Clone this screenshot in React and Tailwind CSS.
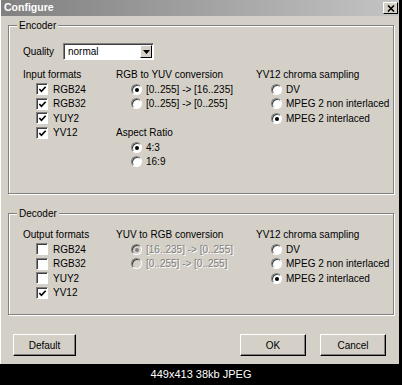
import React from 'react';

const font = { fontFamily: '"Liberation Sans", Arial, sans-serif' };

function Check({ checked }) {
  return (
    <span className="relative w-[12px] h-[12px] bg-white border border-t-[#808080] border-l-[#808080] border-b-white border-r-white shadow-[inset_1px_1px_0_#404040] shrink-0">
      {checked && (
        <svg viewBox="0 0 10 10" className="absolute left-[1px] top-[1px] w-[9px] h-[9px]">
          <path d="M1.5 4.5 L3.8 7 L8.5 2" fill="none" stroke="#000" strokeWidth="1.8" />
        </svg>
      )}
    </span>
  );
}

function Radio({ checked, disabled }) {
  return (
    <span
      className={`relative w-[11px] h-[11px] rounded-full border border-t-[#808080] border-l-[#808080] border-b-white border-r-white shadow-[inset_1px_1px_0_#404040] shrink-0 ${disabled ? 'bg-[#d4d0c8]' : 'bg-white'}`}
    >
      {checked && (
        <span className={`absolute left-[3px] top-[3px] w-[4px] h-[4px] rounded-full ${disabled ? 'bg-[#808080]' : 'bg-black'}`} />
      )}
    </span>
  );
}

function CheckRow({ label, checked }) {
  return (
    <div className="h-[14.5px] flex items-center pl-[13px] gap-[5px]">
      <Check checked={checked} />
      <span>{label}</span>
    </div>
  );
}

function RadioRow({ label, checked, disabled }) {
  return (
    <div className="h-[14.5px] flex items-center pl-[15px] gap-[4px]">
      <Radio checked={checked} disabled={disabled} />
      <span className={disabled ? 'text-[#808080] [text-shadow:1px_1px_0_#fff]' : ''}>{label}</span>
    </div>
  );
}

function Heading({ children }) {
  return <div className="h-[16px] flex items-center">{children}</div>;
}

function Group({ title, className, children }) {
  return (
    <div className={`relative border border-[#808080] shadow-[1px_1px_0_#fff,inset_1px_1px_0_#fff] ${className}`}>
      <span className="absolute left-[8px] top-[-7px] px-[2px] bg-[#d4d0c8] leading-[13px]">{title}</span>
      {children}
    </div>
  );
}

function Button({ children, className }) {
  return (
    <button className={`h-[22px] bg-[#d4d0c8] border border-t-white border-l-white border-b-black border-r-black shadow-[inset_-1px_-1px_0_#808080] flex items-center justify-center ${className}`}>
      {children}
    </button>
  );
}

function Chroma() {
  return (
    <div>
      <Heading>YV12 chroma sampling</Heading>
      <RadioRow label="DV" />
      <RadioRow label="MPEG 2 non interlaced" />
      <RadioRow label="MPEG 2 interlaced" checked />
    </div>
  );
}

export default function App() {
  return (
    <div className="w-[402px] h-[385px] bg-black flex flex-col text-[10px] text-black" style={font}>
      <div className="w-[399px] h-[364px] bg-[#d4d0c8] border-l border-l-white flex flex-col">
        <div className="h-[16px] flex items-center justify-between bg-gradient-to-r from-[#808080] to-[#c4c4c4] pl-[3px] pr-[1px]">
          <span className="text-white font-bold text-[10.5px]">Configure</span>
          <span className="w-[15px] h-[12px] bg-[#d4d0c8] border border-t-white border-l-white border-b-black border-r-black flex items-center justify-center">
            <svg viewBox="0 0 8 7" className="w-[8px] h-[7px]">
              <path d="M1 0.5 L7 6.5 M7 0.5 L1 6.5" stroke="#000" strokeWidth="1.6" />
            </svg>
          </span>
        </div>

        <div className="flex flex-col pl-[7px] pr-[5px]">
          <Group title="Encoder" className="mt-[9px] h-[169px] pl-[14px] pt-[17px]">
            <div className="flex items-center h-[17px]">
              <span className="w-[40px]">Quality</span>
              <div className="w-[91px] h-[17px] bg-white border border-t-[#808080] border-l-[#808080] border-b-white border-r-white shadow-[inset_1px_1px_0_#404040] flex items-center justify-between pl-[4px] pr-[1px]">
                <span>normal</span>
                <span className="w-[12px] h-[13px] bg-[#d4d0c8] border border-t-white border-l-white border-b-black border-r-black flex items-center justify-center">
                  <svg viewBox="0 0 7 4" className="w-[7px] h-[4px]">
                    <path d="M0 0 H7 L3.5 4 Z" fill="#000" />
                  </svg>
                </span>
              </div>
            </div>
            <div className="flex mt-[6px]">
              <div className="w-[93px]">
                <Heading>Input formats</Heading>
                <CheckRow label="RGB24" checked />
                <CheckRow label="RGB32" checked />
                <CheckRow label="YUY2" checked />
                <CheckRow label="YV12" checked />
              </div>
              <div className="w-[140px]">
                <Heading>RGB to YUV conversion</Heading>
                <RadioRow label="[0..255] -> [16..235]" checked />
                <RadioRow label="[0..255] -> [0..255]" />
                <div className="mt-[13px]">
                  <Heading>Aspect Ratio</Heading>
                  <RadioRow label="4:3" checked />
                  <RadioRow label="16:9" />
                </div>
              </div>
              <Chroma />
            </div>
          </Group>

          <Group title="Decoder" className="mt-[19px] h-[102px] pl-[14px] pt-[12px]">
            <div className="flex">
              <div className="w-[93px]">
                <Heading>Output formats</Heading>
                <CheckRow label="RGB24" />
                <CheckRow label="RGB32" />
                <CheckRow label="YUY2" />
                <CheckRow label="YV12" checked />
              </div>
              <div className="w-[140px]">
                <Heading>YUV to RGB conversion</Heading>
                <RadioRow label="[16..235] -> [0..255]" checked disabled />
                <RadioRow label="[0..255] -> [0..255]" disabled />
              </div>
              <Chroma />
            </div>
          </Group>

          <div className="mt-[19px] flex justify-between pl-[5px] pr-[8px]">
            <Button className="w-[63px]">Default</Button>
            <div className="flex gap-[14px]">
              <Button className="w-[66px]">OK</Button>
              <Button className="w-[66px]">Cancel</Button>
            </div>
          </div>
        </div>
      </div>
      <div className="flex-1 flex items-center justify-center text-white text-[11px]">449x413 38kb JPEG</div>
    </div>
  );
}
